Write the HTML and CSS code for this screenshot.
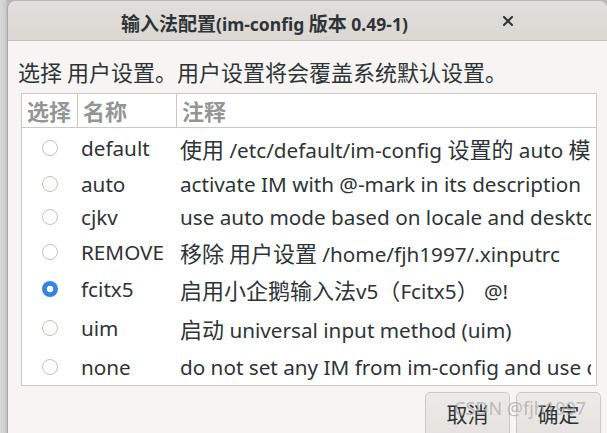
FILE: index.html
```html
<!DOCTYPE html>
<html lang="zh-CN">
<head>
<meta charset="utf-8">
<title>输入法配置</title>
<link rel="stylesheet" href="styles.css">
</head>
<body>
<div class="window">
  <header class="titlebar">
    <span class="title"><span class="c">输入法配置</span>(im-config <span class="c">版本</span> 0.49-1)</span>
    <span class="close"><svg width="10" height="10" viewBox="0 0 10 10"><path d="M1 1 L9 9 M9 1 L1 9" stroke="#2e3436" stroke-width="2" stroke-linecap="square"/></svg></span>
  </header>
  <main class="content">
    <p class="prompt">选择 用户设置。用户设置将会覆盖系统默认设置。</p>
    <div class="list">
      <div class="list-head">
        <div class="hcell">选择</div>
        <div class="hcell">名称</div>
        <div class="hcell last">注释</div>
      </div>
      <div class="row h39"><span class="sel"><span class="radio"></span></span><span class="name">default</span><span class="desc"><span class="c">使用</span> /etc/default/im-config <span class="c">设置的</span> auto <span class="c">模式</span></span></div>
      <div class="row h33"><span class="sel"><span class="radio"></span></span><span class="name">auto</span><span class="desc">activate IM with @-mark in its description</span></div>
      <div class="row h33"><span class="sel"><span class="radio"></span></span><span class="name">cjkv</span><span class="desc">use auto mode based on locale and desktop</span></div>
      <div class="row h37"><span class="sel"><span class="radio"></span></span><span class="name">REMOVE</span><span class="desc"><span class="c">移除 用户设置</span> /home/fjh1997/.xinputrc</span></div>
      <div class="row h38"><span class="sel"><span class="radio checked"></span></span><span class="name">fcitx5</span><span class="desc"><span class="c">启用小企鹅输入法</span>v5<span class="c">（</span>Fcitx5<span class="c">）</span> @!</span></div>
      <div class="row h40"><span class="sel"><span class="radio"></span></span><span class="name">uim</span><span class="desc"><span class="c">启动</span> universal input method (uim)</span></div>
      <div class="row h37"><span class="sel"><span class="radio"></span></span><span class="name">none</span><span class="desc">do not set any IM from im-config and use desktop default</span></div>
    </div>
    <div class="actions">
      <button class="btn">取消</button>
      <button class="btn">确定</button>
    </div>
  </main>
  <div class="watermark">CSDN @fjh1997</div>
</div>
</body>
</html>
```

FILE: styles.css
```css
html, body {
  margin: 0;
  padding: 0;
  height: 100%;
  overflow: hidden;
}
body {
  background: linear-gradient(to right, #d8d8d8 0, #cfcfcf 5px, #b8b8b8 8px);
  font-family: "Noto Sans", "Noto Sans CJK SC", sans-serif;
  color: #2e3436;
}
.window {
  position: relative;
  margin: 1px 0 0 8px;
  height: 440px;
  background: #f6f5f4;
  border-radius: 8px 8px 0 0;
  box-shadow: -1px 0 0 #a8a8a8;
}
.c {
  font-family: "Noto Sans CJK SC", sans-serif;
}
.titlebar {
  height: 39px;
  display: flex;
  align-items: center;
  background: linear-gradient(#e1dedb, #dbd7d3);
  border-bottom: 1px solid #c3bdb7;
  border-radius: 8px 8px 0 0;
  padding-left: 113px;
}
.title {
  font-weight: bold;
  font-size: 17.5px;
  margin-top: 3px;
  white-space: nowrap;
}
.title .c {
  font-size: 19px;
}
.close {
  display: flex;
  margin-left: 95px;
  margin-top: 1px;
}
.content {
  padding: 0 11px 0 13px;
}
.prompt {
  margin: 0 0 0 -3px;
  padding-top: 15px;
  height: 37px;
  font-family: "Noto Sans CJK SC", sans-serif;
  font-size: 22px;
  line-height: 30px;
  white-space: nowrap;
}
.list {
  width: 574px;
  height: 291px;
  border: 1px solid #cdc7c2;
  background: #ffffff;
  overflow: hidden;
}
.list-head {
  display: grid;
  grid-template-columns: 56px 99px 1fr;
  height: 33px;
  border-bottom: 1px solid #cdc7c2;
}
.hcell {
  border-right: 1px solid #cdc7c2;
  padding-left: 5px;
  font-family: "Noto Sans CJK SC", sans-serif;
  font-size: 22px;
  font-weight: bold;
  color: #939696;
  line-height: 32px;
}
.hcell.last {
  border-right: none;
}
.row {
  display: grid;
  grid-template-columns: 56px 99px 1fr;
  align-items: center;
  font-size: 20.7px;
  white-space: nowrap;
  padding-right: 5px;
}
.row .c {
  font-size: 22px;
}
.h33 { height: 33px; }
.h37 { height: 37px; }
.h38 { height: 38px; }
.h39 { height: 39px; }
.h40 { height: 40px; }
.sel {
  display: flex;
  padding-left: 20px;
}
.radio {
  width: 14px;
  height: 14px;
  border: 1px solid #c6bfb9;
  border-radius: 50%;
  background: #ffffff;
}
.radio.checked {
  width: 16px;
  height: 16px;
  border: none;
  background: radial-gradient(circle, #ffffff 0, #ffffff 3px, #3584e4 3.6px);
}
.name {
  padding-left: 3px;
}
.desc {
  padding-left: 3px;
  overflow: hidden;
}
.actions {
  display: flex;
  justify-content: flex-end;
  gap: 6px;
  margin-top: 6px;
  margin-right: -5px;
}
.btn {
  width: 85px;
  height: 50px;
  border: 1px solid #cdc7c2;
  border-radius: 5px;
  background: linear-gradient(#edebe9, #e4e1de);
  font-family: "Noto Sans CJK SC", sans-serif;
  font-size: 21px;
  color: #2e3436;
  padding: 0 0 8px;
}
.watermark {
  position: absolute;
  left: 446px;
  top: 395px;
  font-family: "Noto Sans", sans-serif;
  font-size: 18px;
  color: rgba(160, 160, 160, 0.65);
  white-space: nowrap;
}
```
